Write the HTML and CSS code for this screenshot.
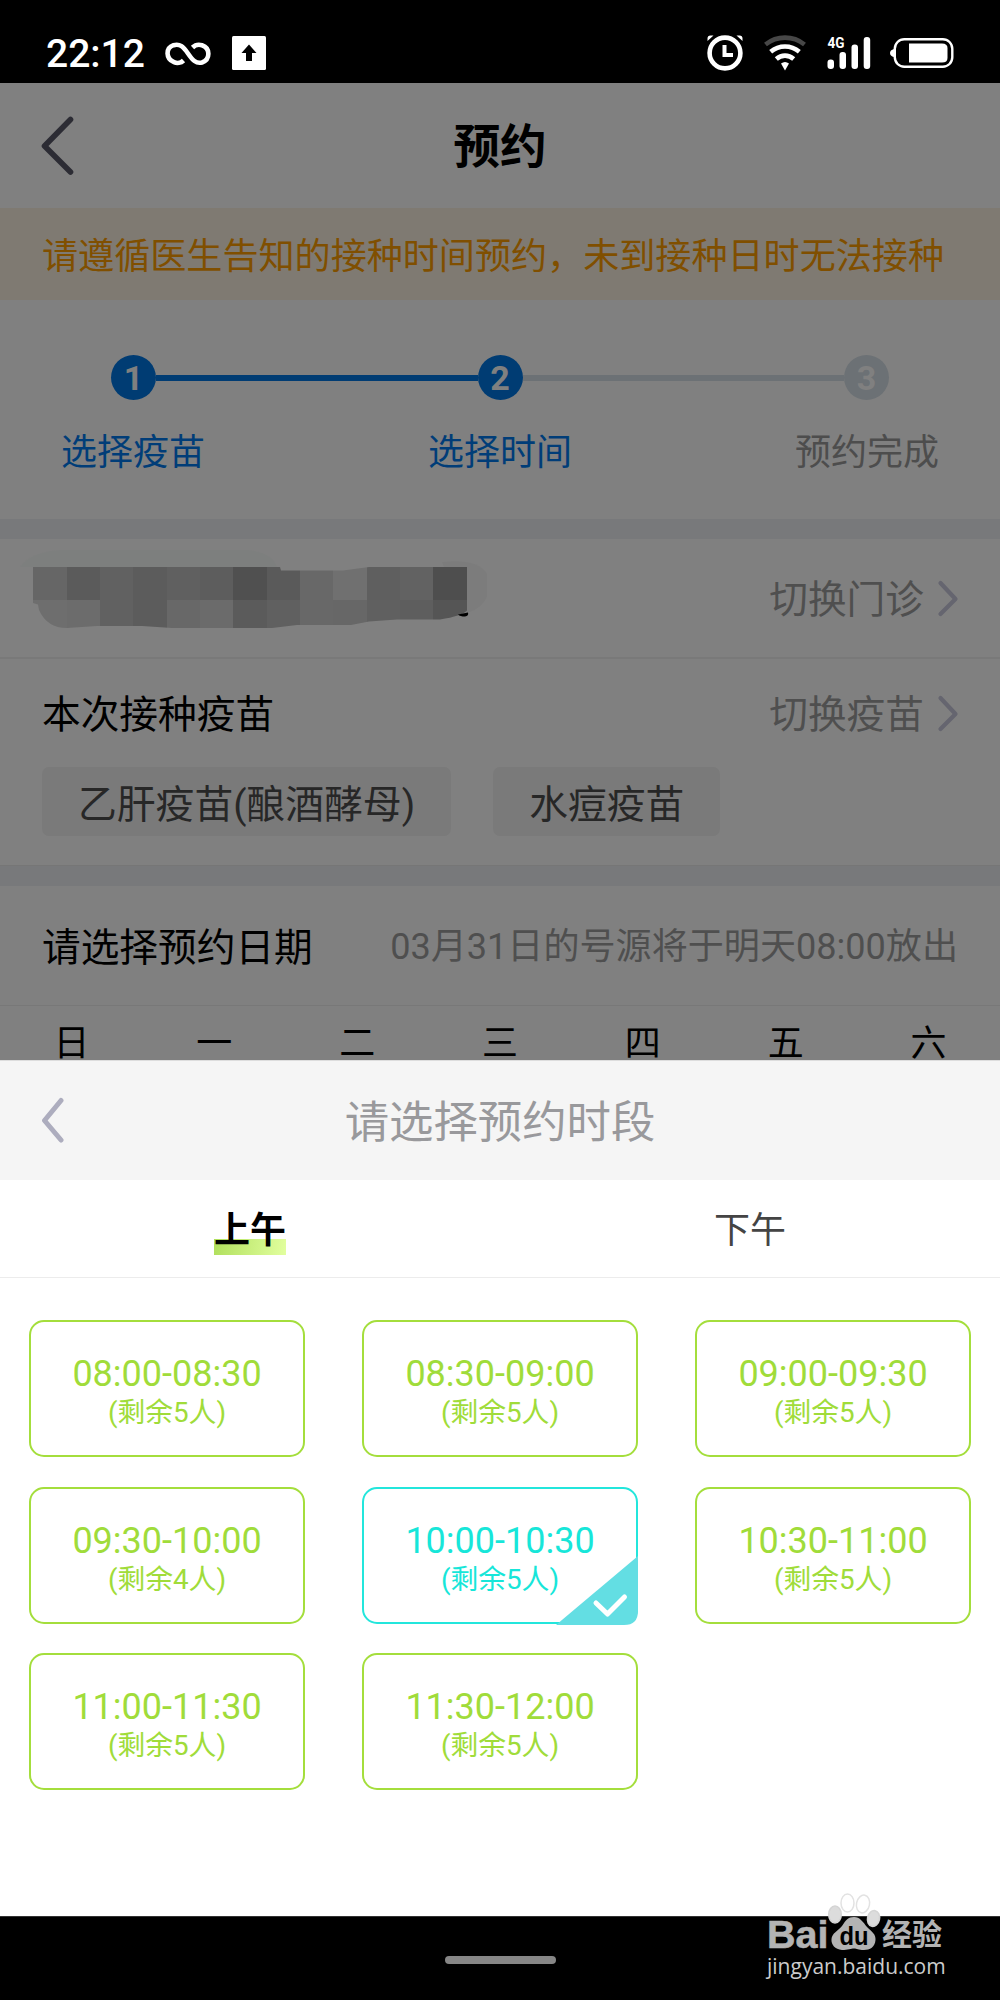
FILE: index.html
```html
<!DOCTYPE html>
<html lang="zh-CN">
<head>
<meta charset="utf-8">
<title>预约</title>
<link rel="stylesheet" href="styles.css">
</head>
<body>
<div class="phone">
  <div class="status">
    <span class="clock">22:12</span>
    <svg class="st-inf" width="46" height="26" viewBox="0 0 46 26" fill="none" stroke="#fff" stroke-width="4.600"><path d="M18.500 19.500C16 22 12 22.500 9 21.200C.5 17.500 .5 7 8.500 4.200C15 2.200 18.500 6 23 12.500C27.500 19 31 23 37 21.500C45.500 18.500 45.500 7 37 4.200C33.500 3.200 30 4 27.500 6.500"/></svg>
    <svg class="st-up" width="34" height="34" viewBox="0 0 34 34"><rect width="34" height="34" rx="1.500" fill="#fff"/><path d="M17 8.500l7.500 8.500h-4.500V25h-6v-8H9.500z" fill="#000"/></svg>
    <span class="grow"></span>
    <svg class="st-alarm" width="36" height="36" viewBox="0 0 36 36" fill="none" stroke="#fff"><circle cx="18" cy="18" r="15.400" stroke-width="4.600"/><path d="M17.500 10v10H26" stroke-width="4"/><path d="M.5 6V3.500A3 3 0 0 1 3.500.5H6.500zM35.500 6V3.500A3 3 0 0 0 32.500.5H29.500z" fill="#fff" stroke="none"/></svg>
    <svg class="st-wifi" width="42" height="36" viewBox="0 0 42 36" fill="none" stroke="#fff" stroke-width="4.600"><path d="M1.500 9.500C13 .3 29 .3 40.500 9.500" stroke="#474747"/><path d="M6.700 16.800C15 9.800 27 9.800 35.300 16.800"/><path d="M12.300 24C17.500 19.500 24.500 19.500 29.700 24"/><path d="M17 28.500Q21 25.500 25 28.500L21 35.500z" fill="#fff" stroke="none"/></svg>
    <svg class="st-sig" width="44" height="42" viewBox="0 -8 44 42"><g fill="#fff"><rect x=".5" y="22.500" width="6.500" height="9.500" rx="3"/><rect x="12.500" y="15" width="6.500" height="17" rx="3"/><rect x="24.500" y="7.500" width="6.500" height="24.500" rx="3"/><rect x="36.700" y="0" width="6.500" height="32" rx="3"/><text x=".5" y="11" class="net" textLength="17" lengthAdjust="spacingAndGlyphs">4G</text></g></svg>
    <svg class="st-bat" width="64" height="30" viewBox="0 0 64 30"><rect x="4.800" y="1.200" width="57.500" height="27.600" rx="9.500" fill="none" stroke="#fff" stroke-width="2.400"/><path d="M4 11Q0 12 0 15Q0 18 4 19z" fill="#fff"/><path d="M19 5.500H52Q57.500 5.500 57.500 10V20Q57.500 24.500 52 24.500H19z" fill="#fff"/></svg>
  </div>

  <div class="page">
    <header class="nav">
      <svg class="nav-back" width="34" height="62" viewBox="0 0 34 62" fill="none" stroke="#2c2c34" stroke-width="5.600" stroke-linecap="round" stroke-linejoin="round"><path d="M29.500 4.500L3.500 31L29.500 57"/></svg>
      <h1>预约</h1>
      <span class="nav-side"></span>
    </header>
    <div class="notice">请遵循医生告知的接种时间预约，未到接种日时无法接种</div>

    <section class="steps">
      <div class="step-track">
        <b class="dot">1</b><i class="bar"></i><b class="dot">2</b><i class="bar off"></i><b class="dot off">3</b>
      </div>
      <div class="step-labels"><span>选择疫苗</span><span>选择时间</span><span class="off">预约完成</span></div>
    </section>

    <div class="band"></div>
    <section class="row clinic">
      <svg class="mosaic" width="480" height="100" viewBox="0 0 480 100">
        <defs><clipPath id="smear"><path d="M26 17H273L274 20.500H336L362 17H460V60.500Q455 66 433 69.500H390L362 71.500L344 75H290L265 78H165L135 76H90L60 78Q40 78 32 60L31 54.500L26 53z"/></clipPath></defs>
        <path d="M13 17Q25 0 60 0H240Q265 2 270 17z" fill="#7d7f7e"/>
        <path d="M435 12Q475 8 482 28V40Q478 60 455 64z" fill="#7c7c7c"/>
        <g clip-path="url(#smear)" shape-rendering="crispEdges">
          <path fill="#666" d="M26 17h34v33h-34z"/><path fill="#5b5b5b" d="M60 17h33v33h-33z"/><path fill="#616161" d="M93 17h33v33h-33z"/><path fill="#5c5c5c" d="M126 17h34v33h-34z"/><path fill="#606060" d="M160 17h33v33h-33z"/><path fill="#5d5d5d" d="M193 17h33v33h-33z"/><path fill="#505050" d="M226 17h34v33h-34z"/><path fill="#5a5a5a" d="M260 17h33v33h-33z"/><path fill="#686868" d="M293 17h33v33h-33z"/><path fill="#707070" d="M326 17h34v33h-34z"/><path fill="#5f5f5f" d="M360 17h33v33h-33z"/><path fill="#626262" d="M393 17h33v33h-33z"/><path fill="#4e4e4e" d="M426 17h34v33h-34z"/>
          <path fill="#6e6e6e" d="M26 50h34v30h-34z"/><path fill="#6c6c6c" d="M60 50h33v30h-33z"/><path fill="#616161" d="M93 50h33v30h-33z"/><path fill="#5c5c5c" d="M126 50h34v30h-34z"/><path fill="#686868" d="M160 50h33v30h-33z"/><path fill="#6b6b6b" d="M193 50h33v30h-33z"/><path fill="#5b5b5b" d="M226 50h34v30h-34z"/><path fill="#606060" d="M260 50h33v30h-33z"/><path fill="#686868" d="M293 50h33v30h-33z"/><path fill="#676767" d="M326 50h34v30h-34z"/><path fill="#606060" d="M360 50h33v30h-33z"/><path fill="#5e5e5e" d="M393 50h33v30h-33z"/><path fill="#555" d="M426 50h34v30h-34z"/>
        </g>
        <path d="M451 64.500L461 62.500Q462 66 458 66.500Q453 66.500 451 64.500z" fill="#000"/>
      </svg>
      <a class="more"><span>切换门诊</span><svg width="22" height="38" viewBox="0 0 22 38" fill="none" stroke="#65656f" stroke-width="4.200" stroke-linecap="round" stroke-linejoin="round"><path d="M3.500 3L18.500 19L3.500 34"/></svg></a>
    </section>

    <section class="vaccine">
      <div class="row"><h2>本次接种疫苗</h2>
      <a class="more"><span>切换疫苗</span><svg width="22" height="38" viewBox="0 0 22 38" fill="none" stroke="#65656f" stroke-width="4.200" stroke-linecap="round" stroke-linejoin="round"><path d="M3.500 3L18.500 19L3.500 34"/></svg></a></div>
      <div class="chips"><span>乙肝疫苗(酿酒酵母)</span><span>水痘疫苗</span></div>
    </section>
    <div class="band"></div>

    <section class="row date"><h2>请选择预约日期</h2><span class="hint">03月31日的号源将于明天08:00放出</span></section>
    <div class="week"><span>日</span><span>一</span><span>二</span><span>三</span><span>四</span><span>五</span><span>六</span></div>
  </div>

  <div class="sheet">
    <div class="sheet-head">
      <svg width="24" height="46" viewBox="0 0 24 46" fill="none" stroke="#adadbe" stroke-width="5" stroke-linecap="round" stroke-linejoin="round"><path d="M20 3.500L3.500 23.500L20 43"/></svg>
      <h3>请选择预约时段</h3>
      <span class="sheet-side"></span>
    </div>
    <div class="tabs"><div><span class="tab on">上午</span></div><div><span class="tab">下午</span></div></div>
    <div class="slots">
      <div class="slot"><b>08:00-08:30</b><small>(剩余5人)</small></div>
      <div class="slot"><b>08:30-09:00</b><small>(剩余5人)</small></div>
      <div class="slot"><b>09:00-09:30</b><small>(剩余5人)</small></div>
      <div class="slot"><b>09:30-10:00</b><small>(剩余4人)</small></div>
      <div class="slot picked"><b>10:00-10:30</b><small>(剩余5人)</small>
        <svg class="tick" width="82" height="70" viewBox="0 0 82 70"><path d="M82 1V56Q82 70 68 70H0z" fill="#63dee3"/><path d="M40 48L51.500 59L68.500 42" fill="none" stroke="#fff" stroke-width="5" stroke-linecap="round" stroke-linejoin="round"/></svg>
      </div>
      <div class="slot"><b>10:30-11:00</b><small>(剩余5人)</small></div>
      <div class="slot"><b>11:00-11:30</b><small>(剩余5人)</small></div>
      <div class="slot"><b>11:30-12:00</b><small>(剩余5人)</small></div>
    </div>
  </div>

  <div class="homebar"><span></span></div>

  <div class="mark">
    <div class="mark-top">
      <span class="bai">Bai</span>
      <svg width="54" height="60" viewBox="0 0 54 60">
        <path fill="#b3b3b3" d="M27 25C33 25 36 30 40 35C45 40 49 42 48.500 48C48 55 43 58 37 58C31 58 30 56.500 27 56.500S21 58 15 58C8 57 4 53 4.500 47C5 41 11 39 15 34C19 28 21 25 27 25z"/>
        <g fill="#fff" stroke="#e2e2e2" stroke-width="1.500"><ellipse cx="20.500" cy="11" rx="6.500" ry="9"/><ellipse cx="36" cy="12" rx="6.500" ry="9" transform="rotate(12 36 12)"/></g>
        <g fill="#dcdcdc" stroke="#d4d4d4" stroke-width="1.500"><ellipse cx="8" cy="22.500" rx="6.300" ry="8.500"/><ellipse cx="46.500" cy="26.500" rx="6" ry="8" transform="rotate(12 46.500 26.500)"/></g>
        <text x="12.500" y="52.500" class="du" textLength="29" lengthAdjust="spacingAndGlyphs">du</text>
      </svg>
      <span class="jy">经验</span>
    </div>
    <div class="url">jingyan.baidu.com</div>
  </div>
</div>
</body>
</html>
```
FILE: styles.css
```css
* { box-sizing: border-box; }
body { margin: 0; background: #000; font-family: Roboto, "Noto Sans CJK SC", sans-serif; }
h1, h2, h3 { margin: 0; font-weight: 400; }
svg { display: block; flex: none; }

.phone { position: relative; width: 1000px; height: 2000px; overflow: hidden; background: #000; display: flex; flex-direction: column; }

.status { height: 83px; flex: none; display: flex; align-items: flex-start; padding: 0 46px; background: #000; color: #fff; }
.clock { width: 119px; margin-top: 30px; font-size: 39px; line-height: 48px; font-weight: 500; white-space: nowrap; }
.st-inf { margin-top: 41px; }
.st-up { margin: 36px 0 0 21px; }
.grow { flex: 1; }
.st-alarm { margin-top: 35px; }
.st-wifi { margin: 35px 0 0 21px; }
.st-sig { margin: 29px 0 0 21px; }
.st-bat { margin: 38px 0 0 19px; }
.net { font-family: Roboto, sans-serif; font-size: 15.5px; font-weight: 700; }

.page { height: 977px; flex: none; overflow: hidden; background: #808080; }
.nav { height: 125px; display: flex; align-items: center; justify-content: space-between; padding: 0 41px; }
.nav h1 { font-size: 46.600px; font-weight: 700; line-height: 60px; padding-top: 2px; color: #000; }
.nav-side { width: 34px; }
.notice { height: 92px; line-height: 92px; padding: 3px 0 0 42px; background: #7f7a72; color: #804f00; font-size: 36.1px; white-space: nowrap; }

.steps { height: 219px; padding-top: 55px; }
.step-track { display: flex; align-items: center; padding: 0 111px; height: 45px; }
.dot { width: 45px; height: 45px; flex: none; border-radius: 50%; background: #003c73; color: #808080; font-size: 34px; line-height: 46px; font-weight: 700; text-align: center; }
.dot.off { background: #6c7175; color: #808080; }
.bar { flex: 1; height: 6px; background: #003c73; }
.bar.off { background: #6c7175; }
.step-labels { display: flex; justify-content: space-between; padding: 0 61px; margin-top: 27px; line-height: 52px; font-size: 36px; color: #003d78; }
.step-labels .off { color: #4d4d4d; }

.band { height: 20px; background: #78797b; }
.row { display: flex; justify-content: space-between; align-items: center; }
.clinic { height: 120px; padding: 0 41px 0 7px; border-bottom: 2px solid #797979; }
.mosaic { margin-top: 3px; }
.more { display: flex; align-items: center; gap: 13px; padding-top: 2px; font-size: 38.700px; line-height: 56px; color: #4f4f4f; }
.more span { padding-top: 2px; }
.vaccine { height: 207px; border-bottom: 1px solid #767676; }
.vaccine .row { height: 108px; padding: 0 41px 0 42px; }
.row h2 { font-size: 38.700px; line-height: 56px; padding-top: 4px; color: #000; }
.chips { display: flex; gap: 42px; padding-left: 42px; }
.chips span { height: 69px; line-height: 69px; padding: 3px 36px 0; border-radius: 7px; background: #7a7a7a; color: #272727; font-size: 38.800px; white-space: nowrap; }
.date { height: 120px; padding: 0 42px; border-bottom: 1px solid #787878; }
.date .hint { font-size: 36.100px; line-height: 52px; padding-top: 3px; color: #4f4f4f; }
.week { display: grid; grid-template-columns: repeat(7, 1fr); padding-top: 12px; text-align: center; font-size: 36px; line-height: 52px; color: #000; }

.sheet { height: 856px; flex: none; background: #fff; }
.sheet-head { height: 119.500px; display: flex; align-items: center; justify-content: space-between; padding: 0 41px; background: #f5f5f5; border-top: 1px solid #ddd; }
.sheet-head h3 { font-size: 44.400px; line-height: 60px; padding-top: 5px; color: #99999c; }
.sheet-side { width: 24px; }
.tabs { height: 98.500px; display: grid; grid-template-columns: 1fr 1fr; align-items: center; justify-items: center; border-bottom: 1px solid #ececec; }
.tab { display: block; height: 54px; padding-top: 3px; font-size: 36px; line-height: 54px; color: #444; }
.tab.on { color: #000; font-weight: 700; background: linear-gradient(100deg, #b0df5c, #e2ff9f) 0 bottom / 100% 16px no-repeat; }
.slots { display: grid; grid-template-columns: repeat(3, 276px); grid-auto-rows: 137px; column-gap: 57px; row-gap: 29.670px; padding: 42px 29px 0; }
.slot { position: relative; border: 2px solid #a4de3c; border-radius: 15px; color: #a0dc3a; padding-top: 31px; text-align: center; }
.slot b { display: block; font-size: 36px; font-weight: 400; line-height: 42px; }
.slot small { display: block; font-size: 27.800px; line-height: 36px; }
.slot.picked { border-color: #23e6dc; color: #17e6d9; }
.tick { position: absolute; right: -2px; bottom: -3px; }

.homebar { height: 84px; display: flex; justify-content: center; padding-top: 38.500px; background: #000; border-top: 1px solid #333; }
.homebar span { width: 111px; height: 8px; border-radius: 4px; background: #868686; }

.mark { position: absolute; left: 767px; top: 1892px; color: #b3b3b3; }
.mark-top { display: flex; align-items: flex-end; height: 60px; }
.bai { width: 60px; font-family: "Liberation Sans", sans-serif; font-weight: 700; font-size: 39.500px; line-height: 36px; -webkit-text-stroke: .6px #b3b3b3; }
.du { font-family: "Liberation Sans", sans-serif; font-weight: 700; font-size: 25px; fill: #000; }
.jy { margin-left: 1px; font-size: 30px; line-height: 34px; font-weight: 700; white-space: nowrap; }
.url { font-family: "Open Sans", sans-serif; font-size: 21px; line-height: 28px; color: #ccc; white-space: nowrap; }
```
